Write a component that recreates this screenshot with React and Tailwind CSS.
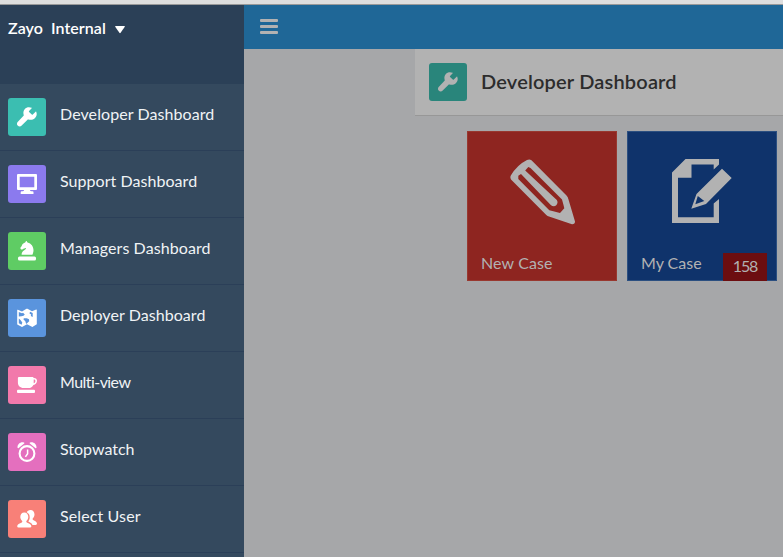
import React from "react";

const Wrench = () => (
  <svg viewBox="0 0 20 20" className="h-5 w-5" fill="currentColor">
    <path d="M14.6.8C12.2-.2 9.300.2 7.700 2.200C6.300 3.900 6.100 5.900 6.700 7.900C6.800 8.400 6.700 8.700 6.300 9.100L.9 14.700C-.3 15.900-.3 17.500.7 18.600C1.800 19.800 3.500 19.800 4.700 18.600L10.300 12.900C10.700 12.500 11 12.400 11.500 12.500C13.700 13.100 16 12.900 17.800 11.300C19.700 9.600 20.200 7 19.200 4.700C19.100 4.400 18.900 4.400 18.600 4.700L15.800 7.500C15.500 7.800 15.100 7.800 14.800 7.500L12.100 4.900C11.800 4.600 11.800 4.200 12.100 3.900L14.700 1.300C14.900 1.100 14.900.9 14.600.8Z" />
  </svg>
);

const Monitor = () => (
  <svg viewBox="0 0 20 20" className="h-5 w-5" fill="currentColor">
    <path fillRule="evenodd" d="M1 0h18a1 1 0 0 1 1 1v14a1 1 0 0 1-1 1h-6q0 1.300 1.500 1.300h1a1 1 0 0 1 1 1v1.700H3.700v-1.700a1 1 0 0 1 1-1h1Q7 17.300 7 16H1a1 1 0 0 1-1-1V1a1 1 0 0 1 1-1ZM2.700 2.700v10.600h14.600V2.700Z" />
  </svg>
);

const Knight = () => (
  <svg viewBox="0 0 20 20" className="h-5 w-5" fill="currentColor">
    <path d="M4.600 13.700C4.500 11.400 6 10.200 7.600 9.100C8.800 8.300 9.200 7.600 9 7C7.700 7.300 6.700 7.500 5.700 8.300C4.900 9 3.500 8.400 3.400 7.300C3.300 6.400 4.300 5.700 4.800 4.700C5.300 3.300 6.500 2 8.200 1.600L8.900.2C9.100-.1 9.500-.1 9.700.2L10.500 1.400C14.300 2.300 16.500 5.500 16.500 9.300C16.500 11 16 12.400 15.400 13.700Z" />
    <rect x="1" y="15.400" width="18" height="4.200" rx="1.500" />
  </svg>
);

const WorldMap = () => (
  <svg viewBox="0 0 20 20" className="h-5 w-5" fill="currentColor">
    <path fillRule="evenodd" d="M.2 2.100Q.2 1.500.9 1.800L5 3.600L9.500.8Q10 .5 10.500.8L15 3.300L19.200 1.500Q19.800 1.300 19.800 2V16.200L15.400 19L10 16.300L5 19L.7 16.700Q.2 16.400.2 15.900ZM1.800 4V8.400L4.400 8.200L6.500 7.800L7.800 6.500L6 4.700L5 5.300ZM13 3.800L12.500 5.600L14.200 6.500L13.800 8L15.700 9V5ZM6.800 10.300L6.500 11.500L8.300 13.200L9.200 16L12.200 13.200L12 11.300L9.800 10.300ZM1.800 10.500V15.200L4.600 16.700L5.300 14.600L3.500 12Z" />
  </svg>
);

const Cup = () => (
  <svg viewBox="0 0 20 20" className="h-5 w-5" fill="currentColor">
    <path fillRule="evenodd" d="M2 2h13.800q.7 0 .8.900h.3C18.900 2.900 20 4.100 20 5.800C20 8 18.600 9.600 16.400 9.900C15.500 11.900 13.700 13 11.400 13H6.500C3.200 13 .9 10.700.9 7.500V3Q.9 2 2 2ZM16.700 4.600V8.200C17.800 7.900 18.400 7.100 18.400 5.900C18.400 5.100 17.700 4.600 16.700 4.600Z" />
    <rect x="0" y="14.700" width="18" height="3.200" rx="1" />
  </svg>
);

const Clock = () => (
  <svg viewBox="0 0 20 20" className="h-5 w-5" fill="none" stroke="currentColor">
    <circle cx="10" cy="11.500" r="7.400" strokeWidth="2.100" />
    <path d="M10.600 7.500v4.200l-2.200 3.200" strokeWidth="1.500" />
    <path fill="currentColor" stroke="none" d="M.5 5.500C.4 2.200 3.500-.5 6.900.5Q7.800.9 7.200 1.500L1.700 6.100Q.6 6.700.5 5.500ZM19.500 5.500C19.600 2.200 16.500-.5 13.100.5Q12.200.9 12.800 1.500L18.300 6.100Q19.400 6.700 19.500 5.500Z" />
  </svg>
);

const Users = () => (
  <svg viewBox="0 0 20 20" className="h-5 w-5" fill="currentColor">
    <path d="M7.300 3.600C4.800 3.600 3.300 5.500 3.300 8C3.300 9.500 4 10.900 5 11.800C5.500 12.300 5.400 13.100 4.800 13.400C2.600 14.300.2 15.300.2 17.200Q.2 18.600 1.600 18.600H13Q14.400 18.600 14.400 17.200C14.400 15.300 12 14.300 9.800 13.400C9.200 13.100 9.100 12.300 9.600 11.800C10.700 10.900 11.300 9.500 11.300 8C11.300 5.500 9.800 3.600 7.300 3.600Z" />
    <path d="M13.500.9C11.600.9 10.200 1.900 9.700 3.300C11.800 4.300 12.800 6 12.700 8.400C12.700 9.900 12.200 11.200 11.300 12.400C13.200 13.200 14.800 14.200 15.500 15.900H18.700Q20 15.900 20 14.500C20 12.700 18 11.700 16.100 10.900C15.500 10.500 15.400 9.900 15.900 9.300C16.900 8.300 17.500 6.900 17.500 5.500C17.500 2.800 15.900.9 13.500.9Z" />
  </svg>
);

const items = [
  { label: "Developer Dashboard", Icon: Wrench, color: "bg-[#3bbeb1]", track: "tracking-[0.08px]" },
  { label: "Support Dashboard", Icon: Monitor, color: "bg-[#8b7aee]", track: "tracking-[0.05px]" },
  { label: "Managers Dashboard", Icon: Knight, color: "bg-[#5fcc64]", track: "tracking-[0.08px]" },
  { label: "Deployer Dashboard", Icon: WorldMap, color: "bg-[#5a94dd]", track: "tracking-[0.06px]" },
  { label: "Multi-view", Icon: Cup, color: "bg-[#f279ab]", track: "tracking-[-0.55px]" },
  { label: "Stopwatch", Icon: Clock, color: "bg-[#e46fbe]", track: "tracking-[0px]" },
  { label: "Select User", Icon: Users, color: "bg-[#f88078]", track: "tracking-[0.12px]" },
];

const Sidebar = () => (
  <aside className="flex w-[244px] shrink-0 flex-col overflow-hidden bg-[#34495e]">
    <div className="flex h-[79px] shrink-0 items-start bg-[#2b4057] pl-2 pt-[13px] text-base font-semibold leading-5 text-white">
      <span className="w-[97px] whitespace-pre tracking-[0.05px]">Zayo  Internal</span>
      <svg viewBox="0 0 10 8" className="ml-[10px] mt-2 h-2 w-[10px]" fill="currentColor">
        <path d="M.7 0h8.600q.9 0 .5.8L5.600 6.800q-.6.8-1.200 0L.2.8Q-.2 0 .7 0Z" />
      </svg>
    </div>
    <nav>
      {items.map(({ label, Icon, color, track }) => (
        <div key={label} className="flex h-[67px] items-start border-b border-[#2b3f58] pl-2 pt-[14px]">
          <div className={`flex h-[38px] w-[38px] shrink-0 items-center justify-center rounded-[3px] text-white ${color}`}>
            <Icon />
          </div>
          <span className={`ml-[14px] mt-[6px] whitespace-nowrap text-base leading-5 text-[#f0f3f5] ${track}`}>{label}</span>
        </div>
      ))}
    </nav>
  </aside>
);

const Pencil = () => (
  <svg viewBox="0 0 66 66" className="h-[66px] w-[66px]">
    <path
      fillRule="evenodd"
      fill="#b2b2b2"
      d="M17 1Q19.500-.2 21.500 1.300L56.500 36.500Q58 38 58.500 40.500L65 62.500Q65 65.300 62 65.200L39 57.500Q37.500 57 36.300 56L1 20.500Q-.2 18.500.8 16.500Q7 6 17 1ZM18.300 8L15.200 11.500L46.800 41Q48.400 43.500 46.500 46Q44 48.300 41 46.300L11 15L8.300 16.700V20L39.300 51.200L43.300 52.200L50 54L54.300 49.300L53.500 46L52 40.500L20.500 9Z"
    />
  </svg>
);

const NoteEdit = () => (
  <svg viewBox="0 0 60 64" className="h-16 w-[60px]" fill="#b2b2b2">
    <path d="M13.500 0H47V5.500L41.700 10.500V5.500H19.500V18.700H6V58.300H41.700V44.500L47 40V64H0V13.500Z" />
    <path fillRule="evenodd" d="M50 9.700L59.700 19L34 45L19.300 49.700L24.500 35ZM25.800 37L23.300 45.300L32.300 42Z" />
  </svg>
);

const Main = () => (
  <main className="flex min-w-0 flex-1 flex-col bg-[#a6a7a9]">
    <header className="flex h-11 shrink-0 items-start bg-[#1f6797] pl-4 pt-[14px]">
      <div className="flex flex-col gap-[3px]">
        <div className="h-[3px] w-[18px] rounded-[1px] bg-[#b2b2b2]" />
        <div className="h-[3px] w-[18px] rounded-[1px] bg-[#b2b2b2]" />
        <div className="h-[3px] w-[18px] rounded-[1px] bg-[#b2b2b2]" />
      </div>
    </header>
    <div className="ml-[171px] flex h-[67px] shrink-0 items-start border-b border-[#979797] bg-[#b2b2b2] pl-[14px] pt-[14px]">
      <div className="flex h-[38px] w-[38px] items-center justify-center rounded-[3px] bg-[#29857b] text-[#b2b2b2]">
        <Wrench />
      </div>
      <h1 className="ml-[14px] mt-[6px] whitespace-nowrap text-[20px] font-semibold leading-6 tracking-[0.18px] text-[#2c2c2c]">Developer Dashboard</h1>
    </div>
    <div className="ml-[223px] mt-[15px] flex gap-[10px] text-base leading-5 text-[#b2b2b2]">
      <div className="flex h-[150px] w-[150px] shrink-0 flex-col border border-[#98382f] bg-[#8e2520] pl-[13px]">
        <div className="ml-[29px] mt-[27px] h-[94px] shrink-0">
          <Pencil />
        </div>
        <span className="tracking-[0.12px]">New Case</span>
      </div>
      <div className="flex h-[150px] w-[150px] shrink-0 flex-col border border-[#2b4f80] bg-[#0f336b] pl-[13px]">
        <div className="ml-[31px] mt-[27px] h-[94px] shrink-0">
          <NoteEdit />
        </div>
        <div className="flex items-start justify-between pr-[9px]">
          <span>My Case</span>
          <span className="flex h-[28px] w-11 items-center justify-center bg-[#6c0e10] pb-[2px] tracking-[-1.1px]">158</span>
        </div>
      </div>
    </div>
  </main>
);

export default function App() {
  return (
    <div className="flex h-[557px] w-[783px] flex-col overflow-hidden font-[Lato,sans-serif]">
      <div className="h-[5px] shrink-0 border-b border-[#999999] bg-[#dedede]" />
      <div className="flex min-h-0 flex-1">
        <Sidebar />
        <Main />
      </div>
    </div>
  );
}
